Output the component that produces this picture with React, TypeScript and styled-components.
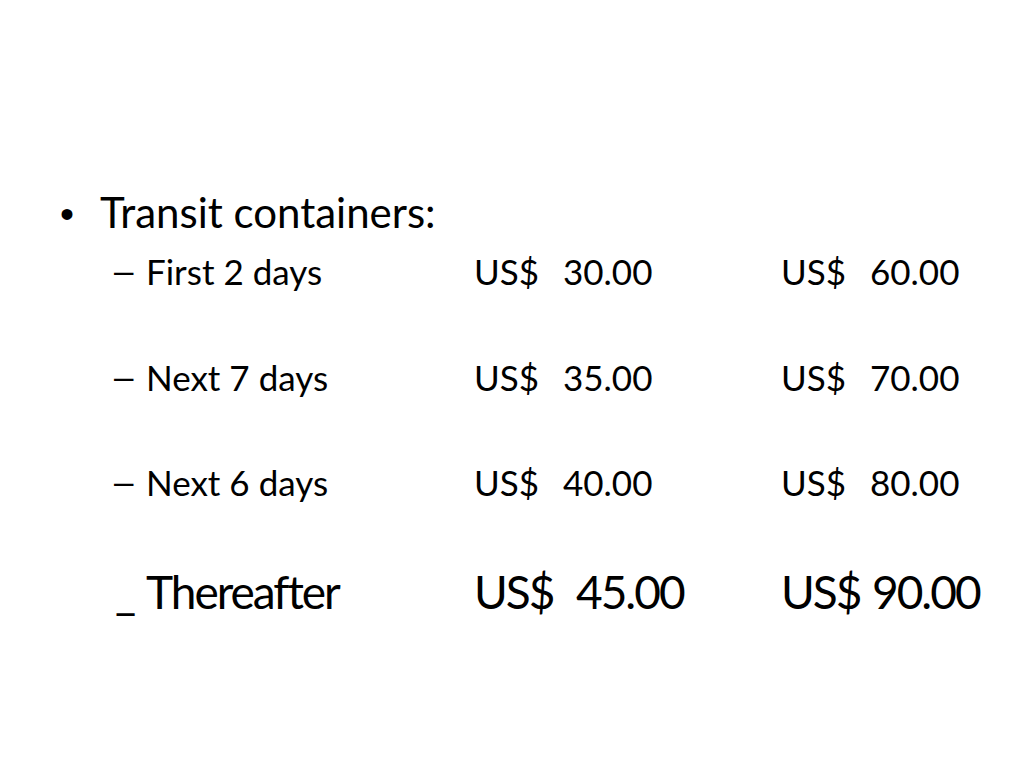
import React from "react";
import styled, { createGlobalStyle } from "styled-components";

const Global = createGlobalStyle`
  html, body { margin: 0; padding: 0; background: #ffffff; }
  body { font-family: Lato, "Open Sans", "Liberation Sans", sans-serif; color: #000; }
`;

const Slide = styled.div`
  width: 1024px;
  height: 768px;
  box-sizing: border-box;
  padding-top: 186px;
  background: #fff;
`;

const Heading = styled.div`
  display: flex;
  align-items: baseline;
  padding-left: 60px;
  font-size: 42px;
  line-height: 52px;
  height: 52px;
`;

const Bullet = styled.span`
  width: 40px;
  font-size: 40px;
  font-family: "Liberation Sans", sans-serif;
`;

const Row = styled.div<{ $size: number; $gap: number; $track?: number }>`
  display: grid;
  grid-template-columns: 31px 328px 89px 218px 89px auto;
  padding-left: 115px;
  font-size: ${(p) => p.$size}px;
  letter-spacing: ${(p) => p.$track ?? 0}px;
  line-height: 48px;
  margin-top: ${(p) => p.$gap}px;
  white-space: nowrap;
`;

const Dash = styled.span`
  font-family: "Liberation Sans", sans-serif;
  margin-left: -1px;
`;

const Cell = styled.span<{ $shift?: number }>`
  padding-left: ${(p) => p.$shift ?? 0}px;
`;

const rows = [
  { label: "First 2 days", a: "30.00", b: "60.00", gap: 9 },
  { label: "Next 7 days", a: "35.00", b: "70.00", gap: 58 },
  { label: "Next 6 days", a: "40.00", b: "80.00", gap: 57 },
];

export default function App() {
  return (
    <>
      <Global />
      <Slide>
        <Heading>
          <Bullet>•</Bullet>
          <span>Transit containers:</span>
        </Heading>
        {rows.map((r) => (
          <Row key={r.label} $size={35} $gap={r.gap}>
            <Dash>–</Dash>
            <Cell>{r.label}</Cell>
            <Cell>US$</Cell>
            <Cell>{r.a}</Cell>
            <Cell>US$</Cell>
            <Cell>{r.b}</Cell>
          </Row>
        ))}
        <Row $size={46} $gap={62} $track={-2}>
          <Cell>_</Cell>
          <Cell>Thereafter</Cell>
          <Cell>US$</Cell>
          <Cell $shift={13}>45.00</Cell>
          <Cell>US$</Cell>
          <Cell $shift={2}>90.00</Cell>
        </Row>
      </Slide>
    </>
  );
}
